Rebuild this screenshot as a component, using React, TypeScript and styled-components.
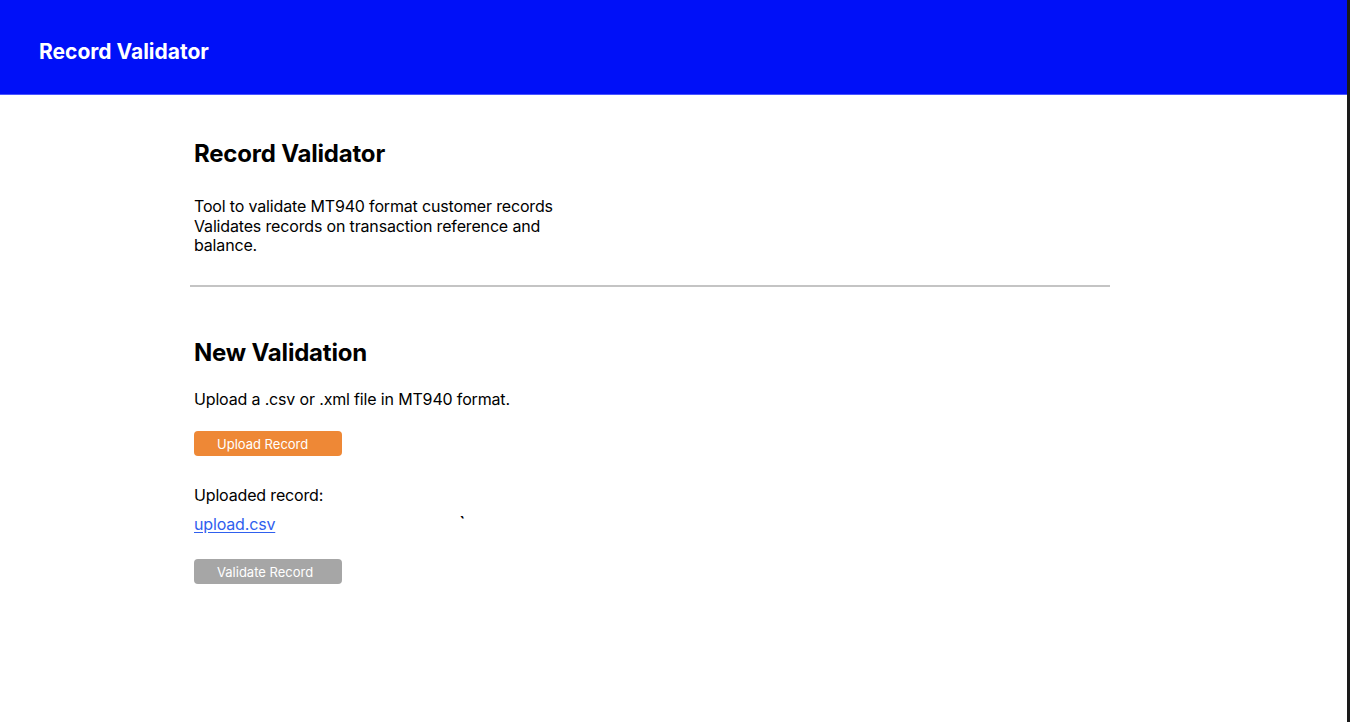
import React from "react";
import styled, { createGlobalStyle } from "styled-components";

const Global = createGlobalStyle`
  html, body { margin: 0; padding: 0; background: #ffffff; }
  body { font-family: Inter, "Noto Sans", sans-serif; color: #000; }
`;

const Frame = styled.div`
  display: flex;
  min-height: 722px;
`;

const Page = styled.div`
  flex: 1;
  display: flex;
  flex-direction: column;
`;

const EdgeBar = styled.div`
  width: 3px;
  background: #1a1a1a;
`;

const Header = styled.header`
  height: 95px;
  background: #0010f8;
  border-bottom: 1px solid #4a55ff;
  box-sizing: border-box;
  display: flex;
  align-items: center;
  padding: 8px 0 0 39px;
`;

const HeaderTitle = styled.h1`
  margin: 0;
  color: #ffffff;
  font-size: 21px;
  font-weight: 700;
`;

const Main = styled.main`
  width: 920px;
  margin-left: 190px;
  padding-top: 44px;
`;

const Section = styled.section`
  padding: 0 4px;
  display: flex;
  flex-direction: column;
  align-items: flex-start;
`;

const Heading = styled.h2<{ $after: number }>`
  margin: 0 0 ${(p) => p.$after}px;
  font-size: 24px;
  line-height: 29px;
  font-weight: 700;
  letter-spacing: -0.2px;
`;

const Text = styled.p<{ $after: number; $maxWidth?: number }>`
  margin: 0 0 ${(p) => p.$after}px;
  font-size: 16px;
  line-height: 19.5px;
  letter-spacing: -0.16px;
  max-width: ${(p) => (p.$maxWidth ? `${p.$maxWidth}px` : "none")};
`;

const Divider = styled.hr`
  margin: 0 0 51px;
  border: none;
  height: 2px;
  background: #c4c4c4;
`;

const Button = styled.button<{ $variant: "primary" | "disabled"; $after: number }>`
  width: 148px;
  height: 25px;
  margin: 0 0 ${(p) => p.$after}px;
  padding: 0 0 0 23px;
  border: none;
  border-radius: 4px;
  text-align: left;
  font-family: Inter, "Noto Sans", sans-serif;
  font-size: 13px;
  color: #ffffff;
  background: ${(p) => (p.$variant === "primary" ? "#ee8836" : "#a6a6a6")};
  cursor: ${(p) => (p.$variant === "primary" ? "pointer" : "default")};
`;

const LinkRow = styled.div`
  display: flex;
  align-items: flex-start;
  gap: 184px;
  margin-bottom: 25px;
`;

const FileLink = styled.a`
  font-size: 16px;
  line-height: 19.5px;
  letter-spacing: -0.16px;
  color: #2f60ee;
  text-decoration: underline;
  text-underline-offset: 2px;
`;

const Stray = styled.span`
  font-size: 17px;
  line-height: 17px;
  font-weight: 600;
`;

export default function App() {
  return (
    <>
      <Global />
      <Frame>
        <Page>
          <Header>
            <HeaderTitle>Record Validator</HeaderTitle>
          </Header>
          <Main>
            <Section>
              <Heading $after={29}>Record Validator</Heading>
              <Text $after={29} $maxWidth={370}>
                Tool to validate MT940 format customer records
                <br />
                Validates records on transaction reference and balance.
              </Text>
            </Section>
            <Divider />
            <Section>
              <Heading $after={23}>New Validation</Heading>
              <Text $after={22}>Upload a .csv or .xml file in MT940 format.</Text>
              <Button $variant="primary" $after={30}>Upload Record</Button>
              <Text $after={9}>Uploaded record:</Text>
              <LinkRow>
                <FileLink href="#">upload.csv</FileLink>
                <Stray>`</Stray>
              </LinkRow>
              <Button $variant="disabled" $after={0} disabled>
                Validate Record
              </Button>
            </Section>
          </Main>
        </Page>
        <EdgeBar />
      </Frame>
    </>
  );
}
